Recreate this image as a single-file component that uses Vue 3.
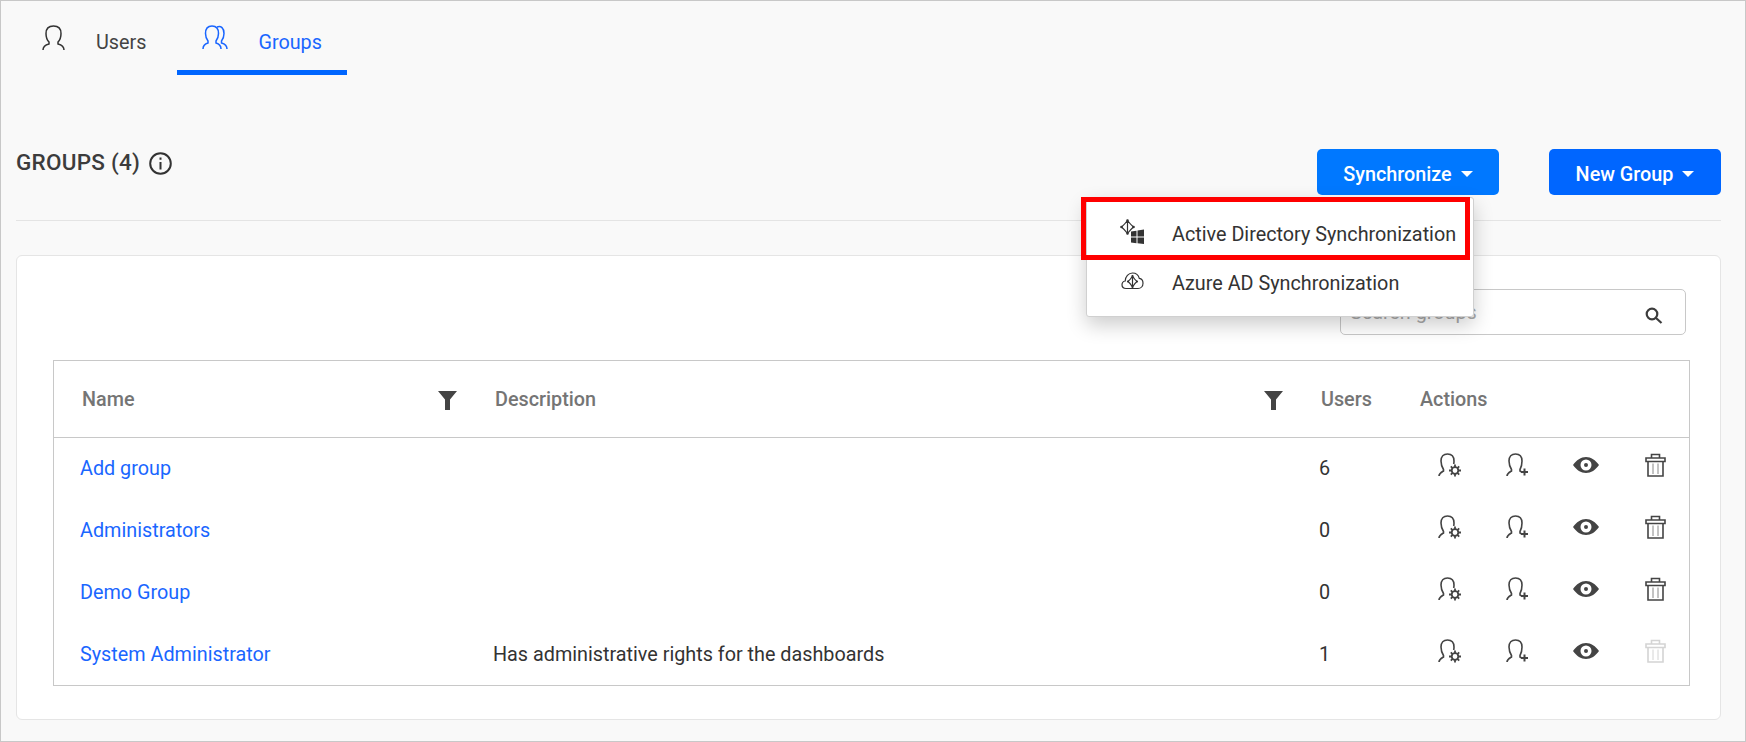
<template>
  <div class="page">
    <nav class="tabs">
      <a class="tab">
        <svg class="tab-icon" width="23" height="25" viewBox="0 0 23 25"><path d="M1 25c0-3 2-5 6-6v-2C5 15 4 12 4 8.500 4 3.500 7 1 11.500 1S19 3.500 19 8.500c0 3.500-1 6.500-3 8.500v2c4 1 6 3 6 6" /></svg>
        <span>Users</span>
      </a>
      <a class="tab active">
        <svg class="tab-icon" width="26" height="25" viewBox="0 0 26 25"><path d="M1 24c0-3 1.500-5 5-6v-2C4.500 14 3.500 11.500 3.500 8.500 3.500 3.500 6 1 10 1s6.500 2.500 6.500 7.500c0 3-1 5.500-2.500 7.500v2c3.500 1 5 3 5 6" /><path d="M15 2c4-1.500 7 1 7 6.500 0 3-1 5.500-2.500 7.500v2c3.500 1 5.500 3 5.500 6" /></svg>
        <span>Groups</span>
      </a>
    </nav>

    <header class="head">
      <h1 class="title">
        GROUPS (4)
        <svg width="23" height="23" viewBox="0 0 23 23" class="info"><circle cx="11.500" cy="11.500" r="10.300" /><path d="M11.500 10v7.500M11.500 5.500v2.200" /></svg>
      </h1>
      <div class="actions">
        <div class="sync-wrap">
          <button class="btn sync">Synchronize<i class="caret"></i></button>
          <div class="menu">
            <div class="menu-item">
              <svg class="menu-icon ad" width="24" height="25" viewBox="0 0 24 25">
                <path class="thin" d="M7.500 1.500Q4.500 5.500 1.500 8 4.500 10.500 7.500 14.500 10.500 10.500 13.500 8 10.500 5.500 7.500 1.500zM7.500 1.500v13" />
                <path class="dots" d="M6.200 1.500a1.300 1.300 0 1 0 2.600 0 1.300 1.300 0 1 0-2.600 0zM.2 8a1.300 1.300 0 1 0 2.600 0 1.300 1.300 0 1 0-2.600 0zM12.200 8a1.300 1.300 0 1 0 2.600 0 1.300 1.300 0 1 0-2.600 0zM6.200 14.500a1.300 1.300 0 1 0 2.600 0 1.300 1.300 0 1 0-2.600 0z" />
                <path class="win" d="M11 12.500l5.500-.8v5.800H11zM17.500 11.500l6.500-1v7H17.500zM11 18.500h5.500v5.800L11 23.500zM17.500 18.500H24v6.500l-6.500-.8z" />
              </svg>
              <span>Active Directory Synchronization</span>
            </div>
            <div class="menu-item">
              <svg class="menu-icon az" width="23" height="18" viewBox="0 0 23 18">
                <path class="thin" d="M5 16.500C2.500 16.500 1 14.700 1 12.700 1 10.800 2.400 9.300 4.200 9 4.300 4.500 7.500 1 11.500 1c3.500 0 6 2.300 6.800 5.400C20.500 6.800 22 8.800 22 11.200c0 2.900-2 5.300-5 5.300z" />
                <path class="thin" d="M11.500 4Q9.500 7.500 7 9.500 9.500 11.500 11.500 15 13.500 11.500 16 9.500 13.500 7.500 11.500 4zM11.500 4v11" />
                <path class="dots" d="M10.400 4a1.100 1.100 0 1 0 2.200 0 1.100 1.100 0 1 0-2.200 0zM5.900 9.500a1.100 1.100 0 1 0 2.200 0 1.100 1.100 0 1 0-2.200 0zM14.900 9.500a1.100 1.100 0 1 0 2.200 0 1.100 1.100 0 1 0-2.200 0zM10.400 15a1.100 1.100 0 1 0 2.200 0 1.100 1.100 0 1 0-2.200 0z" />
              </svg>
              <span>Azure AD Synchronization</span>
            </div>
            <div class="highlight"></div>
          </div>
        </div>
        <button class="btn new">New Group<i class="caret"></i></button>
      </div>
    </header>

    <div class="card">
      <div class="search">
        <input type="text" placeholder="Search groups" />
        <svg width="18" height="17" viewBox="0 0 18 17" class="search-icon"><circle cx="7" cy="7" r="5.300" /><path d="M11 11l5.500 5" /></svg>
      </div>

      <div class="table-wrap">
        <table class="grid">
          <thead>
            <tr>
              <th class="c-name">Name<svg class="filter" width="19" height="19" viewBox="0 0 19 19"><path d="M0 0h19l-7 8.500V19H7V8.500z" /></svg></th>
              <th class="c-desc">Description<svg class="filter" width="19" height="19" viewBox="0 0 19 19"><path d="M0 0h19l-7 8.500V19H7V8.500z" /></svg></th>
              <th class="c-users">Users</th>
              <th class="c-actions">Actions</th>
            </tr>
          </thead>
          <tbody>
            <tr v-for="group in groups" :key="group.name">
              <td class="c-name"><a class="link">{{ group.name }}</a></td>
              <td class="c-desc">{{ group.description }}</td>
              <td class="c-users">{{ group.users }}</td>
              <td class="c-actions">
                <div class="row-icons">
                  <span class="slot">
                    <svg width="24" height="24" viewBox="0 0 24 24">
                      <path class="line" d="M1 23c0-2.500 2-3.500 4.500-5v-1.500C4 14 3 11.500 3 8 3 3.500 5.500 1 9.500 1s6.500 2.500 6.500 7c0 1-.1 2-.3 3" />
                      <circle class="gear" cx="17" cy="17.500" r="3.300" />
                      <path class="teeth" d="M17 11.500v2.500M17 21v2.500M11 17.500h2.500M20.500 17.500H23M12.800 13.300l1.800 1.800M19.400 19.900l1.800 1.800M12.800 21.700l1.800-1.800M19.400 15.100l1.800-1.800" />
                    </svg>
                  </span>
                  <span class="slot">
                    <svg width="24" height="24" viewBox="0 0 24 24">
                      <path class="line" d="M1 23c0-2.500 2-3.500 4.500-5v-1.500C4 14 3 11.500 3 8 3 3.500 5.500 1 9.500 1s6.500 2.500 6.500 7c0 3.500-.5 6-2 8.500v1.500l2.500 1.500" />
                      <path class="plus" d="M18.500 15.500v7M15 19h7" />
                    </svg>
                  </span>
                  <span class="slot">
                    <svg width="26" height="16" viewBox="0 0 26 16">
                      <path class="solid" fill-rule="evenodd" d="M0 8C3.500 3 8 0 13 0s9.500 3 13 8c-3.500 5-8 8-13 8S3.500 13 0 8zM13 2.500a5.500 5.500 0 1 0 0 11 5.500 5.500 0 0 0 0-11zM13 6a2 2 0 1 1 0 4 2 2 0 0 1 0-4z" />
                    </svg>
                  </span>
                  <span class="slot trash" :class="{ off: group.locked }">
                    <svg width="21" height="24" viewBox="0 0 21 24">
                      <path class="line" d="M1 5h19v3.500H1zM6.500 5V1.500h8V5M3 8.500V23h15V8.500" />
                      <path class="inner" d="M8 10.500V21M13 10.500V21" />
                    </svg>
                  </span>
                </div>
              </td>
            </tr>
          </tbody>
        </table>
      </div>
    </div>
  </div>
</template>

<script setup>
const groups = [
  { name: 'Add group', description: '', users: 6 },
  { name: 'Administrators', description: '', users: 0 },
  { name: 'Demo Group', description: '', users: 0 },
  { name: 'System Administrator', description: 'Has administrative rights for the dashboards', users: 1, locked: true }
]
</script>

<style>
html, body {
  margin: 0;
  background: #f9f9f9;
}
</style>

<style scoped>
.page {
  box-sizing: border-box;
  width: 1746px;
  height: 742px;
  padding: 0 24px 0 15px;
  border: 1px solid #c8c8c8;
  background: #f9f9f9;
  font-family: Roboto, "Liberation Sans", sans-serif;
  font-size: 19.800px;
  color: #333;
  overflow: hidden;
}

.tabs {
  display: flex;
  gap: 6px;
  height: 74px;
  margin-left: 1px;
}

.tab {
  display: flex;
  gap: 31px;
  box-sizing: border-box;
  height: 74px;
  padding: 0 25px;
  border-bottom: 5px solid transparent;
  color: #444;
}

.tab span {
  margin-top: 31px;
  line-height: 22px;
}

.tab-icon {
  margin-top: 24px;
  fill: none;
  stroke: #333;
  stroke-width: 1.500;
}

.tab.active {
  gap: 30px;
  color: #1a66ff;
  border-bottom-color: #0066ff;
}

.tab.active .tab-icon {
  stroke: #1a66ff;
}

.head {
  display: flex;
  justify-content: space-between;
  height: 146px;
  padding-top: 74px;
  box-sizing: border-box;
  border-bottom: 1px solid #e4e4e4;
}

.title {
  display: flex;
  align-items: flex-start;
  gap: 9px;
  margin: 1px 0 0;
  font-size: 22.500px;
  letter-spacing: 0.250px;
  font-weight: 500;
  line-height: 24px;
  color: #3c3c3c;
}

.info {
  margin-top: 2px;
  fill: none;
  stroke: #333;
  stroke-width: 2;
}

.actions {
  display: flex;
  gap: 50px;
}

.sync-wrap {
  position: relative;
}

.btn {
  display: flex;
  align-items: center;
  justify-content: center;
  gap: 9px;
  height: 46px;
  padding: 4px 0 0;
  border: 0;
  border-radius: 5px;
  color: #fff;
  font: 500 19.800px Roboto, sans-serif;
}

.sync {
  width: 182px;
  background: #0078ff;
}

.new {
  width: 172px;
  background: #0066ff;
}

.caret {
  width: 0;
  height: 0;
  border-left: 6.500px solid transparent;
  border-right: 6.500px solid transparent;
  border-top: 6px solid #fff;
}

.menu {
  position: absolute;
  z-index: 5;
  top: 48px;
  left: -231px;
  box-sizing: border-box;
  width: 388px;
  height: 120px;
  padding-top: 12px;
  background: #fff;
  border: 1px solid #d0d0d0;
  border-radius: 3px;
  box-shadow: 0 8px 20px rgba(0, 0, 0, 0.2);
}

.menu-item {
  display: flex;
  align-items: center;
  height: 48px;
  padding-left: 85px;
  position: relative;
}

.menu-item + .menu-item {
  margin-top: 1px;
}

.menu-icon {
  position: absolute;
  left: 33px;
}

.menu-icon.ad {
  top: 9px;
}

.menu-icon.az {
  top: 13px;
  left: 34px;
}

.thin {
  fill: none;
  stroke: #333;
  stroke-width: 1.200;
}

.dots {
  fill: #333;
}

.win {
  fill: #333;
}

.highlight {
  position: absolute;
  top: -1px;
  left: -6px;
  width: 389px;
  height: 63px;
  box-sizing: border-box;
  border: 5px solid #ff0000;
}

.card {
  box-sizing: border-box;
  height: 465px;
  margin-top: 34px;
  padding: 33px 30px 0 36px;
  background: #fff;
  border: 1px solid #e5e5e5;
  border-radius: 6px;
}

.search {
  position: relative;
  width: 346px;
  height: 46px;
  margin-left: auto;
  margin-right: 4px;
}

.search input {
  box-sizing: border-box;
  width: 100%;
  height: 100%;
  padding: 0 45px 0 9px;
  border: 1px solid #c8c8c8;
  border-radius: 5px;
  font: 19.800px Roboto, sans-serif;
  outline: none;
}

.search input::placeholder {
  color: #aaa;
}

.search-icon {
  position: absolute;
  top: 18px;
  right: 23px;
  fill: none;
  stroke: #3c3c3c;
  stroke-width: 2.200;
}

.table-wrap {
  margin-top: 25px;
  border: 1px solid #c8c8c8;
  height: 326px;
  box-sizing: border-box;
}

.grid {
  width: 100%;
  table-layout: fixed;
  border-collapse: collapse;
}

.grid th {
  position: relative;
  box-sizing: border-box;
  height: 76px;
  padding: 2px 0 0 28px;
  border-bottom: 1px solid #c8c8c8;
  font-weight: 500;
  color: #757575;
  text-align: left;
}

.grid td {
  box-sizing: border-box;
  height: 62px;
  padding: 1px 0 0 26px;
  color: #333;
}

.c-name {
  width: 413px;
}

.c-users {
  width: 99px;
}

.c-actions {
  width: 297px;
}

.filter {
  position: absolute;
  top: 30px;
  right: 10px;
  fill: #444;
}

.link {
  color: #1a66ff;
}

.grid td.c-actions {
  padding: 0 0 7px 44px;
}

.row-icons {
  display: flex;
  gap: 40px;
}

.slot {
  display: flex;
  align-items: center;
  justify-content: center;
  width: 28px;
  height: 24px;
}

.line {
  fill: none;
  stroke: #444;
  stroke-width: 1.600;
}

.inner {
  fill: none;
  stroke: #888;
  stroke-width: 1;
}

.gear {
  fill: none;
  stroke: #444;
  stroke-width: 1.800;
}

.teeth {
  fill: none;
  stroke: #444;
  stroke-width: 1.800;
}

.plus {
  fill: none;
  stroke: #444;
  stroke-width: 2;
}

.solid {
  fill: #444;
}

.trash {
  margin-left: 1px;
}

.trash.off .line,
.trash.off .inner {
  stroke: #d4d4d4;
}
</style>
